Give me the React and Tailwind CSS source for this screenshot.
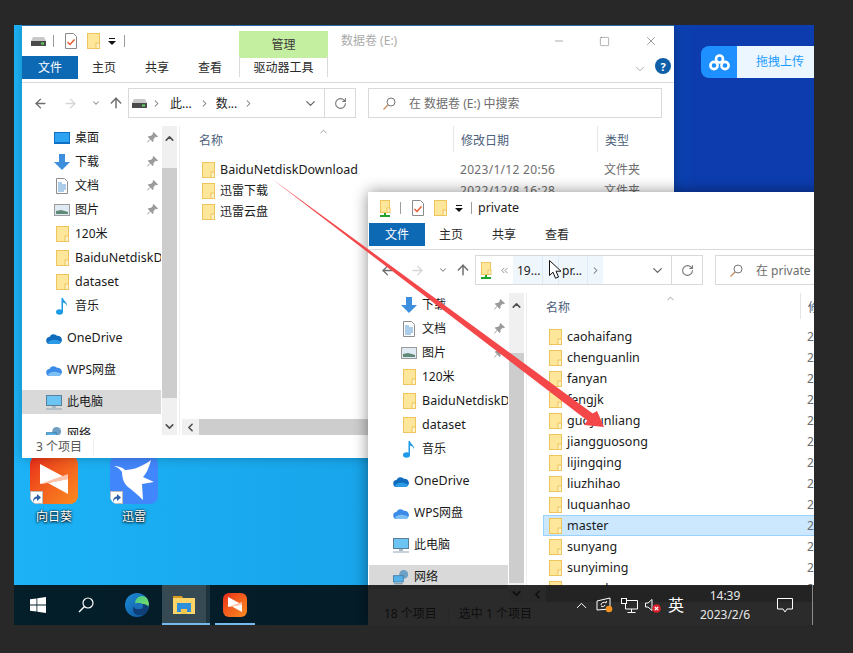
// App.jsx
// Windows 10 desktop with two overlapping Explorer windows and a red annotation arrow
import { ArrowLeft, ArrowRight, ArrowUp, ChevronDown, ChevronRight, ChevronUp, ChevronLeft, ChevronsLeft, RotateCw, X, Minus, Square } from 'lucide-react';

const FONT = "font-['Noto_Sans','Noto_Sans_CJK_SC',sans-serif]";

const FolderIcon = () => (
  <svg width="13" height="16" viewBox="0 0 13 16" className="shrink-0">
    <rect x="0.5" y="0.5" width="12" height="15" fill="#fee79b" stroke="#eec45c" />
    <rect x="9" y="10" width="3.5" height="5.5" fill="#fdf3c8" stroke="#eec45c" />
  </svg>
);

const DriveIcon = () => (
  <svg width="15" height="9" viewBox="0 0 15 9" className="shrink-0">
    <path d="M2 0h11l2 4v5H0V4z" fill="#c9c9c9" />
    <rect y="4" width="15" height="5" fill="#4a4a4a" />
    <rect x="10" y="5.5" width="3" height="2" fill="#5fd35f" />
  </svg>
);

const NetFolderIcon = () => (
  <svg width="11" height="17" viewBox="0 0 11 17" className="shrink-0">
    <rect x="0.5" y="0.5" width="9" height="12" fill="#fee79b" stroke="#eec45c" />
    <rect x="7" y="8" width="3" height="4.5" fill="#fdf3c8" stroke="#eec45c" />
    <path d="M5 13v2M0 16h10" stroke="#22a32c" strokeWidth="2" />
  </svg>
);

const DocCheckIcon = () => (
  <svg width="12" height="16" viewBox="0 0 12 16" className="shrink-0">
    <path d="M.5.5h8l3 3v12H.5z" fill="#fff" stroke="#8a8a8a" />
    <path d="M2.5 9l2.5 2.5L9.500 6.500" fill="none" stroke="#e8562c" strokeWidth="1.4" />
  </svg>
);

const QatArrow = () => (
  <svg width="8" height="7" viewBox="0 0 8 7" className="shrink-0">
    <path d="M1 .5h6" stroke="#111" />
    <path d="M0 3h8L4 7z" fill="#111" />
  </svg>
);

const PinIcon = () => (
  <svg width="11" height="11" viewBox="0 0 11 11">
    <path d="M6.5 0L11 4.500 9.800 5.200 8.600 4.800 6.400 7l.2 2L5.600 10 3.400 7.600.6 10.600 0 10l3-2.900L.8 4.900l1-1 2 .2L6 1.900 5.600.9z" fill="#9a9a9a" />
  </svg>
);

const DesktopIcon = () => (
  <svg width="16" height="12" viewBox="0 0 16 12">
    <rect width="16" height="12" fill="#0f6fc4" />
    <rect x="1" y="1" width="14" height="9" fill="#2ea3f2" />
  </svg>
);

const DownloadIcon = () => (
  <svg width="16" height="16" viewBox="0 0 16 16">
    <path d="M5 0h6v8h5l-8 8-8-8h5z" fill="#3d8fde" />
  </svg>
);

const DocsIcon = () => (
  <svg width="12" height="16" viewBox="0 0 12 16">
    <path d="M.5.5h8l3 3v12H.5z" fill="#fff" stroke="#8e8e8e" />
    <path d="M2 5h4M2 7h8M2 9h8M2 11h8M2 13h6" stroke="#5b9bd5" />
  </svg>
);

const PictureIcon = () => (
  <svg width="16" height="12" viewBox="0 0 16 12">
    <rect x=".5" y=".5" width="15" height="11" fill="#dfeaf2" stroke="#9b9b9b" />
    <path d="M2 7l5-1 7 2v2H2z" fill="#5f8a78" />
  </svg>
);

const MusicIcon = () => (
  <svg width="12" height="17" viewBox="0 0 12 17">
    <ellipse cx="3.5" cy="14" rx="3.5" ry="2.8" fill="#1e9be8" />
    <path d="M5.500 0h1.500c.4 3 4.500 4 4 8-.6-2-2.500-3.200-4-3.500V14H5.500z" fill="#1e9be8" />
  </svg>
);

const CloudIcon = ({ color, light }) => (
  <svg width="16" height="11" viewBox="0 0 16 11">
    <path d="M4 11a3.500 3.500 0 0 1-.5-7A4.500 4.500 0 0 1 11 2.800 4 4 0 0 1 12.500 11z" fill={color} />
    <path d="M2 9.500c2-3 7-4 13-1-.5 1.500-1.500 2.500-2.500 2.500H4C3 11 2.400 10.400 2 9.500z" fill={light} />
  </svg>
);

const PcIcon = () => (
  <svg width="16" height="15" viewBox="0 0 16 15">
    <rect x=".5" y=".5" width="15" height="10" fill="#6cc4f2" stroke="#5a7f9a" />
    <path d="M6 11h4v2H6z" fill="#a9b9c6" />
    <path d="M0 14h16" stroke="#8ea4b6" />
  </svg>
);

const NetworkIcon = () => (
  <svg width="18" height="17" viewBox="0 0 18 17">
    <circle cx="12" cy="5" r="5" fill="#6e9fc4" />
    <rect x=".5" y="6.500" width="11" height="7" fill="#54b2ea" stroke="#3f7ea8" />
    <path d="M1 15.500h10" stroke="#7f9bb0" strokeWidth="1.500" />
  </svg>
);

// Windows shows 12px CJK next to a wider latin face, so the two get different sizes
const isCjk = (text) => /[^\x00-\x7f]/.test(text);

const Label = ({ children, className = '' }) => (
  <span className={`${isCjk(children) ? 'text-[12px]' : 'text-[12.5px]'} whitespace-nowrap ${className}`}>
    {children}
  </span>
);

const NavRow = ({ icon, label, pin, group, active, gap }) => (
  <div className={`relative flex h-6 w-[139px] shrink-0 items-center overflow-hidden ${active ? 'bg-[#d9d9d9]' : ''} ${gap ? 'mt-2' : ''}`}>
    <div className={`flex w-4 shrink-0 justify-center ${group ? 'ml-6' : 'ml-8'}`}>{icon}</div>
    <Label className="ml-[5px] text-[#1a1a1a]">{label}</Label>
    {pin && <div className="absolute left-[125px] top-[6px]"><PinIcon /></div>}
  </div>
);

const NavPane = ({ pinned, activeLabel, thumbTop }) => (
  <div className="flex h-[309px] w-[158px] shrink-0 border-r border-[#eeeeee]">
    <div className="flex w-[140px] shrink-0 flex-col overflow-hidden">
      {pinned.map(([label, icon]) => (
        <NavRow key={label} icon={icon} label={label} pin />
      ))}
      <NavRow icon={<FolderIcon />} label="120米" />
      <NavRow icon={<FolderIcon />} label="BaiduNetdiskD" />
      <NavRow icon={<FolderIcon />} label="dataset" />
      <NavRow icon={<MusicIcon />} label="音乐" />
      <NavRow gap group icon={<CloudIcon color="#0f6cbd" light="#2b9be8" />} label="OneDrive" />
      <NavRow gap group icon={<CloudIcon color="#3d8be8" light="#7cc0f5" />} label="WPS网盘" />
      <NavRow gap group icon={<PcIcon />} label="此电脑" active={activeLabel === '此电脑'} />
      <NavRow gap group icon={<NetworkIcon />} label="网络" active={activeLabel === '网络'} />
    </div>
    <div className="relative h-full w-[15px] bg-[#f0f0f0]">
      <ChevronUp size={13} strokeWidth={3} className="absolute left-px top-[6px] text-[#505050]" />
      <div className="absolute left-0 h-[230px] w-full bg-[#cdcdcd]" style={{ top: thumbTop }} />
      <ChevronDown size={13} strokeWidth={3} className="absolute bottom-[2px] left-px text-[#505050]" />
    </div>
  </div>
);

const FileRow = ({ name, date, type, selected }) => (
  <div className={`relative flex h-[21px] items-center border pl-[5px] ${selected ? 'border-[#99d1ff] bg-[#cce8ff]' : 'border-transparent'}`}>
    <FolderIcon />
    <Label className={`ml-[5px] text-[#1a1a1a] ${isCjk(name) ? '' : 'pt-px'}`}>{name}</Label>
    {date && <span className="absolute left-[263px] whitespace-nowrap text-[12px] tracking-[0.3px] text-[#6d6d6d]">{date}</span>}
    {type && <span className="absolute left-[407px] whitespace-nowrap text-[12px] text-[#6d6d6d]">{type}</span>}
  </div>
);

const ContentPane = ({ rows }) => (
  <div className="flex h-[309px] min-w-0 flex-1 flex-col overflow-hidden pl-px">
    <div className="relative flex h-7 shrink-0 items-center pt-[2px] text-[12px] text-[#4c607a]">
      <span className="ml-[18px]">名称</span>
      <ChevronUp size={11} strokeWidth={1.5} className="absolute left-[137px] top-0 text-[#777]" />
      <div className="absolute left-[272px] top-0 h-[26px] w-px bg-[#e5e5e5]" />
      <span className="absolute left-[280px]">修改日期</span>
      <div className="absolute left-[416px] top-0 h-[26px] w-px bg-[#e5e5e5]" />
      <span className="absolute left-[424px]">类型</span>
    </div>
    <div className="h-[265px] shrink-0 overflow-hidden pt-[5px]">
      <div className="ml-[15px]">
        {rows.map((row) => <FileRow key={row.name} {...row} />)}
      </div>
    </div>
    <div className="relative ml-px h-4 shrink-0 bg-[#cdcdcd]">
      <div className="absolute left-0 top-0 flex h-4 w-[17px] items-center justify-center bg-[#f0f0f0]">
        <ChevronLeft size={13} strokeWidth={3} className="text-[#505050]" />
      </div>
    </div>
  </div>
);

const ExplorerWindow = ({ className, title, titleClass, qatIcon, contextTab, address, pinned, activeLabel, thumbTop, rows, status, searchText }) => (
  <div className={`absolute flex h-[433px] flex-col bg-white ${className}`}>
    {/* quick access + title */}
    <div className="flex h-[30px] shrink-0 items-center pl-[9px]">
      <div className="flex w-[15px] justify-center">{qatIcon}</div>
      <div className="ml-[7px] h-3 w-px bg-[#9c9c9c]" />
      <div className="ml-[11px]"><DocCheckIcon /></div>
      <div className="ml-[10px]"><FolderIcon /></div>
      <div className="ml-[8px]"><QatArrow /></div>
      <div className="ml-[8px] h-3 w-px bg-[#9c9c9c]" />
      {contextTab && (
        <div className="ml-[114px] mt-[6px] flex h-[27px] w-[89px] items-center justify-center bg-[#c5efa0] pt-px text-[12px] text-[#3c3c3c]">管理</div>
      )}
      <span className={titleClass}>{title}</span>
      <div className="ml-auto flex items-center">
        <Minus size={12} strokeWidth={1} className="text-[#555]" />
        <Square size={11} strokeWidth={1} className="ml-[34px] text-[#555]" />
        <X size={14} strokeWidth={1} className="ml-[34px] mr-[16px] text-[#555]" />
      </div>
    </div>

    {/* ribbon tabs */}
    <div className="relative flex h-[23px] shrink-0 items-center text-[12px] text-[#2a2a2a]">
      <div className="flex h-full w-14 items-center justify-center bg-[#0e69b5] pt-px text-white">文件</div>
      <span className="ml-[14px] pt-px">主页</span>
      <span className="ml-[29px] pt-px">共享</span>
      <span className="ml-[29px] pt-px">查看</span>
      {contextTab && (
        <div className="ml-[17px] flex h-[21px] w-[89px] items-center justify-center self-start border-x border-[#dadada] pt-[2px]">驱动器工具</div>
      )}
      <ChevronDown size={14} strokeWidth={1} className="absolute left-[611px] top-[6px] text-[#777]" />
      <div className="absolute left-[633px] top-[2px] flex h-4 w-4 items-center justify-center rounded-full bg-[#0e5fa8] text-[11px] font-bold leading-none text-white">?</div>
    </div>
    <div className="mt-[3px] h-px shrink-0 bg-[#dadada]" />

    {/* address row */}
    <div className="mt-[5px] flex h-[30px] shrink-0 items-center">
      <ArrowLeft size={15} strokeWidth={2.2} className="ml-[11px] text-[#6b6b6b]" />
      <ArrowRight size={15} strokeWidth={2.2} className="ml-[15px] text-[#d6d6d6]" />
      <ChevronDown size={10} strokeWidth={2.5} className="ml-[13px] text-[#8a8a8a]" />
      <ArrowUp size={16} strokeWidth={2.2} className="ml-[7px] text-[#6b6b6b]" />
      <div className="ml-[4px] flex h-full w-[228px] items-center border border-[#d9d9d9]">
        {address}
        <ChevronDown size={15} strokeWidth={2} className="ml-auto text-[#666]" />
        <div className="ml-[6px] flex h-full w-[31px] items-center justify-center border-l border-[#d9d9d9]">
          <RotateCw size={13} strokeWidth={2} className="text-[#777]" />
        </div>
      </div>
      <div className="ml-3 flex h-full w-[294px] items-center border border-[#d9d9d9] text-[12px] text-[#6d6d6d]">
        <svg width="13" height="13" viewBox="0 0 13 13" className="ml-[14px] shrink-0">
          <circle cx="8" cy="5" r="4" fill="none" stroke="#777" />
          <path d="M5 8l-4.500 4.500" stroke="#c98a5a" strokeWidth="1.200" />
        </svg>
        <span className="ml-[13px] whitespace-nowrap pt-px">{searchText}</span>
      </div>
    </div>

    <div className="mt-2 flex shrink-0">
      <NavPane pinned={pinned} activeLabel={activeLabel} thumbTop={thumbTop} />
      <ContentPane rows={rows} />
    </div>

    {/* status bar */}
    <div className="flex h-[23px] shrink-0 items-center text-[12px] text-[#555]">{status}</div>
  </div>
);

const Crumb = ({ children, className = '' }) => (
  <span className={`pt-px text-[12px] text-[#222] ${className}`}>{children}</span>
);

const Sep = ({ className = '' }) => <ChevronRight size={11} strokeWidth={2.2} className={`shrink-0 text-[#777] ${className}`} />;

const ShortcutBadge = () => (
  <div className="absolute bottom-0 left-0 flex h-[13px] w-[13px] items-center justify-center border border-[#bbbbbb] bg-white">
    <svg width="9" height="9" viewBox="0 0 9 9">
      <path d="M1 9C1 5 3 3.500 5 3.500V1l4 3.500L5 8V5.500C3.500 5.500 2 6.500 1 9z" fill="#2a5ea8" />
    </svg>
  </div>
);

const SunloginMark = ({ size }) => (
  <svg width={size} height={size} viewBox="0 0 48 48">
    <path d="M10 8L38 23 10 28z" fill="#ffffff" />
    <path d="M38 23V38L18 27z" fill="#ffffff" />
    <path d="M10 28L38 18v5L18 27z" fill="#ffc3ab" />
  </svg>
);

const DesktopShortcut = ({ className, label, children }) => (
  <div className={`absolute top-[431px] flex w-12 flex-col items-center ${className}`}>
    <div className="relative h-12 w-12 overflow-hidden rounded-lg">
      {children}
      <ShortcutBadge />
    </div>
    <span className="mt-[4px] whitespace-nowrap text-[12px] text-white [text-shadow:0_1px_3px_#000,0_0_2px_#000]">{label}</span>
  </div>
);

const NAV_PINNED_MAIN = [
  ['桌面', <DesktopIcon key="desktop" />],
  ['下载', <DownloadIcon key="down" />],
  ['文档', <DocsIcon key="docs" />],
  ['图片', <PictureIcon key="pics" />],
];

const DRIVE_ROWS = [
  { name: 'BaiduNetdiskDownload', date: '2023/1/12 20:56', type: '文件夹' },
  { name: '迅雷下载', date: '2022/12/8 16:28', type: '文件夹' },
  { name: '迅雷云盘' },
];

const USER_NAMES = ['caohaifang', 'chenguanlin', 'fanyan', 'fengjk', 'guoyunliang', 'jiangguosong', 'lijingqing', 'liuzhihao', 'luquanhao', 'master', 'sunyang', 'sunyiming', 'wangzhe'];

const PRIVATE_ROWS = USER_NAMES.map((name) => ({ name, date: '2', selected: name === 'master' }));

const App = () => (
  <div className={`relative h-[653px] w-[853px] overflow-hidden bg-[#282828] ${FONT}`}>
    <div className="absolute left-[14px] top-[25px] h-[600px] w-[800px] overflow-hidden bg-linear-to-r from-[#1cb2f5] via-[#18a4ea] via-45% to-[#0c3cae] to-85%">
      {/* baidu netdisk float widget */}
      <div className="absolute left-[687px] top-[21px] flex h-8 w-[130px] overflow-hidden rounded-l-lg">
        <div className="flex w-9 items-center justify-center bg-[#1e90ff]">
          <svg width="21" height="17" viewBox="0 0 21 17">
            <g fill="none" stroke="#fff" strokeWidth="2.6">
              <circle cx="10.500" cy="5" r="3.500" />
              <circle cx="5" cy="11.500" r="3.600" />
              <circle cx="16" cy="11.500" r="3.600" />
            </g>
          </svg>
        </div>
        <div className="flex-1 bg-[#ebf6ff] pl-[19px] text-[12px] leading-8 text-[#1e9cff]">拖拽上传</div>
      </div>

      <DesktopShortcut className="left-4" label="向日葵">
        <div className="h-full w-full bg-linear-to-br from-[#e8261a] to-[#fb8a20]"><SunloginMark size={48} /></div>
      </DesktopShortcut>
      <DesktopShortcut className="left-24" label="迅雷">
        <div className="h-full w-full bg-[#4286fb]">
          <svg width="48" height="48" viewBox="0 0 48 48">
            <path d="M4 10C8 10 12 11 15 14C24 14 33 10 41 4C39 12 36 18 33 21L44 26L32 28L33 44C28 39 22 34 18 31C13 27 12 20 12 16C10 13 7 11 4 10z" fill="#ffffff" />
          </svg>
        </div>
      </DesktopShortcut>

      <ExplorerWindow
        className="left-2 top-0 w-[652px] border-t border-[#2b6ca8] shadow-[0_0_10px_rgba(0,0,0,0.25)]"
        title="数据卷 (E:)"
        titleClass="ml-[13px] text-[12px] text-[#aaaaaa]"
        qatIcon={<DriveIcon />}
        contextTab
        pinned={NAV_PINNED_MAIN}
        activeLabel="此电脑"
        thumbTop={42}
        rows={DRIVE_ROWS}
        searchText="在 数据卷 (E:) 中搜索"
        address={
          <>
            <div className="ml-[3px]"><DriveIcon /></div>
            <Sep className="ml-[4px]" />
            <Crumb className="ml-[8px]">此...</Crumb>
            <Sep className="ml-[7px]" />
            <Crumb className="ml-[6px]">数...</Crumb>
            <Sep className="ml-[6px]" />
          </>
        }
        status={
          <>
            <span className="ml-[14px]">3 个项目</span>
            <div className="ml-[11px] h-4 w-px bg-[#eeeeee]" />
          </>
        }
      />

      <ExplorerWindow
        className="left-[354px] top-[167px] w-[653px] border-l border-t border-white shadow-[0_0_14px_rgba(0,0,0,0.45)]"
        title="private"
        titleClass="ml-[6px] text-[12.5px] text-[#1a1a1a]"
        qatIcon={<NetFolderIcon />}
        pinned={NAV_PINNED_MAIN.slice(1)}
        activeLabel="网络"
        thumbTop={60}
        rows={PRIVATE_ROWS}
        searchText="在 private"
        address={
          <>
            <div className="ml-[5px]"><NetFolderIcon /></div>
            <ChevronsLeft size={11} strokeWidth={2} className="ml-[7px] shrink-0 text-[#888]" />
            <div className="ml-[3px] flex h-full items-center bg-[#eff6fc]">
              <Crumb className="w-[29px] pl-1">19...</Crumb>
              <div className="h-full w-[17px] border-x border-[#dcebf7]" />
              <Crumb className="w-[28px] pl-[3px]">pr...</Crumb>
              <div className="flex h-full w-4 items-center justify-center border-l border-[#dcebf7]"><Sep /></div>
            </div>
          </>
        }
        status={
          <>
            <span className="ml-[15px]">18 个项目</span>
            <div className="ml-[11px] h-4 w-px bg-[#eeeeee]" />
            <span className="ml-[10px]">选中 1 个项目</span>
          </>
        }
      />

      {/* taskbar */}
      <div className="absolute left-0 top-[560px] flex h-10 w-[800px] items-center bg-black/[.83] text-white">
        <svg width="16" height="16" viewBox="0 0 16 16" className="ml-4 shrink-0">
          <path d="M0 2.300l6.500-.9v6.200H0zM7.300 1.300L16 0v7.600H7.300zM0 8.400h6.500v6.200L0 13.700zM7.300 8.400H16V16l-8.700-1.300z" fill="#fff" />
        </svg>
        <svg width="16" height="16" viewBox="0 0 16 16" className="ml-8 shrink-0">
          <circle cx="10" cy="6" r="5" fill="none" stroke="#fff" strokeWidth="1.200" />
          <path d="M6.500 9.500L1 15" stroke="#fff" strokeWidth="1.500" />
        </svg>
        <div className="relative ml-[31px] h-6 w-6 shrink-0 overflow-hidden rounded-full bg-linear-to-br from-[#1f8fd8] to-[#0c4f96]">
          <div className="absolute right-0 top-[3px] h-[14px] w-[14px] rounded-full bg-linear-to-br from-[#46c98a] to-[#7fe05a]" />
          <div className="absolute bottom-[2px] left-[8px] h-[11px] w-[16px] rounded-full bg-[#0e3f78]" />
          <div className="absolute left-[9px] top-[10px] h-[6px] w-[9px] rounded-full bg-[#1c6fba]" />
        </div>
        <div className="relative ml-[13px] flex h-full w-11 shrink-0 items-center justify-center bg-white/20">
          <svg width="22" height="18" viewBox="0 0 22 18">
            <path d="M0 0h9l1 2H0z" fill="#d89a22" />
            <rect y="2" width="22" height="16" fill="#fbd568" />
            <path d="M4 7h14v9h-4v-3H8v3H4z" fill="#2f8fdc" />
            <rect x="8" y="13" width="6" height="5" fill="#f4c84e" />
          </svg>
          <div className="absolute bottom-0 left-0 h-[2px] w-full bg-[#76b9ed]" />
        </div>
        <div className="relative h-full w-1 shrink-0 bg-white/10">
          <div className="absolute bottom-0 left-0 h-[2px] w-full bg-[#76b9ed]" />
        </div>
        <div className="relative ml-[5px] flex h-full w-10 shrink-0 items-center justify-center">
          <div className="h-6 w-6 overflow-hidden rounded-md bg-linear-to-br from-[#e8261a] to-[#fb8a20]"><SunloginMark size={24} /></div>
          <div className="absolute bottom-0 left-0 h-[2px] w-full bg-[#76b9ed]" />
        </div>

        <ChevronUp size={17} strokeWidth={1.4} className="ml-[318px] shrink-0 text-white" />
        <svg width="18" height="16" viewBox="0 0 18 16" className="ml-[6px] shrink-0">
          <path d="M1 4l13-3v11l-13 1z" fill="none" stroke="#fff" />
          <path d="M5 8a3 3 0 0 1 5-2M10 6l.5-2M9 8a2.500 2.500 0 0 1-4 1" fill="none" stroke="#fff" />
          <circle cx="13" cy="12" r="3.300" fill="#f7931e" />
        </svg>
        <svg width="17" height="15" viewBox="0 0 17 15" className="ml-[7px] shrink-0">
          <path d="M4.500 2.500H16.500V11H4.500zM10.500 11v3M6.500 14.500h8" fill="none" stroke="#fff" />
          <rect x=".5" y=".5" width="5" height="5" fill="#1d1d1d" stroke="#fff" />
        </svg>
        <svg width="16" height="15" viewBox="0 0 16 15" className="ml-[7px] shrink-0">
          <path d="M.5 5h2.500L7 1.500v11L3 9H.5z" fill="none" stroke="#fff" />
          <circle cx="11.500" cy="10.500" r="4.300" fill="#d8232f" />
          <path d="M9.800 8.800l3.400 3.400M13.200 8.800l-3.400 3.400" stroke="#fff" strokeWidth="1.200" />
        </svg>
        <span className="ml-[7px] shrink-0 text-[16px] leading-none">英</span>
        <div className="ml-[13px] flex w-[56px] shrink-0 flex-col items-center whitespace-nowrap text-[12px] leading-[19px] text-[#e8e8e8]">
          <span>14:39</span>
          <span>2023/2/6</span>
        </div>
        <svg width="16" height="15" viewBox="0 0 16 15" className="ml-[24px] shrink-0">
          <path d="M.5.5h15v10.500H10l-2 3-2-3H.5z" fill="none" stroke="#fff" />
        </svg>
        <div className="ml-[19px] h-full w-px shrink-0 bg-[#8a8a8a]" />
      </div>
    </div>

    {/* mouse pointer in the breadcrumb */}
    <svg width="13" height="19" viewBox="0 0 13 19" className="absolute left-[549px] top-[260px]">
      <path d="M.5.5v15l3.500-3.300 2.500 6 3-1.200-2.500-5.800H12z" fill="#ffffff" stroke="#111111" />
    </svg>

    {/* red annotation arrow */}
    <svg width="853" height="653" viewBox="0 0 853 653" className="pointer-events-none absolute left-0 top-0">
      <path d="M271.500 178.500L592.700 413.400 597 411 604 427 584 425 587.300 420.600Z" fill="#f3474a" />
    </svg>
  </div>
);

export default App;
